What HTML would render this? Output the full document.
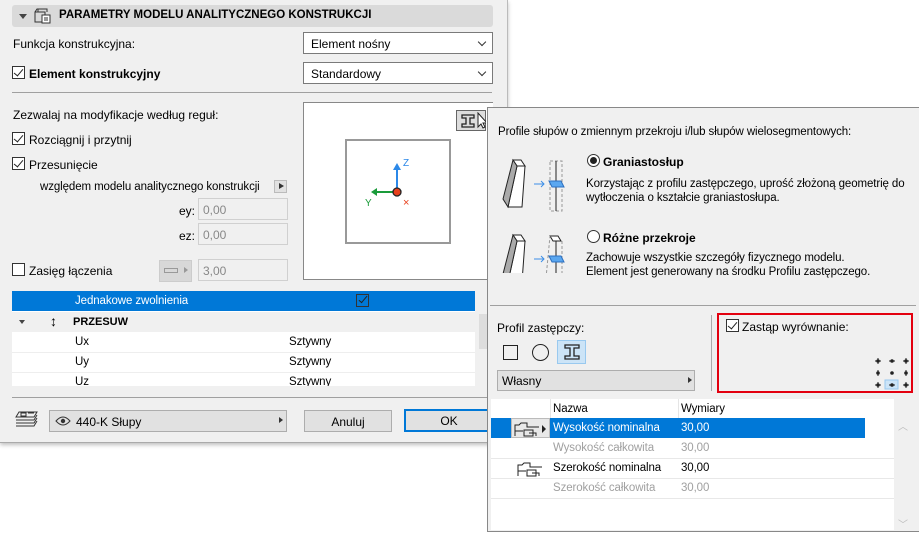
<!DOCTYPE html>
<html><head><meta charset="utf-8"><style>
*{box-sizing:border-box;margin:0;padding:0}
body{width:919px;height:533px;overflow:hidden;background:#fff;font-family:"Liberation Sans",sans-serif;font-size:12px;color:#000;position:relative}
.a{position:absolute;white-space:nowrap}
.cb{position:absolute;width:13px;height:13px;border:1px solid #333;background:#fff}
.cb.on::after{content:"";position:absolute;left:3px;top:0px;width:4px;height:8px;border:solid #222;border-width:0 1.5px 1.5px 0;transform:rotate(40deg)}
.dd{position:absolute;background:#fff;border:1px solid #7a7a7a;padding:4px 7px}
.dd::after{content:"";position:absolute;right:7px;top:6px;width:5px;height:5px;border:solid #333;border-width:0 1px 1px 0;transform:rotate(45deg)}
.inp{position:absolute;background:#f0f0f0;border:1px solid #d0d0d0;color:#888;padding:4px 4px}
.btn{position:absolute;background:#e1e1e1;border:1px solid #adadad;text-align:center;padding-top:4px}
.n{font-size:11.5px;letter-spacing:-0.1px}
</style></head><body>
<!-- left panel -->
<div class="a" style="left:0;top:0;width:508px;height:443px;background:#f0f0f0;border-right:1px solid #bbb;border-bottom:1px solid #aaa;box-shadow:0 2px 4px rgba(0,0,0,.25)"></div>
<div class="a" style="left:12px;top:5px;width:481px;height:22px;background:#dadada;border-radius:3px"></div>
<div class="a" style="left:19px;top:14px;border:4px solid transparent;border-top:5px solid #444"></div>
<svg class="a" style="left:34px;top:8px" width="18" height="16"><path d="M1 4h10v10H1zM1 4l2-3h10v3M4 1v3" fill="none" stroke="#333"/><rect x="8" y="7" width="8" height="8" fill="#fff" stroke="#333"/><path d="M10 10h4M10 12h4" stroke="#333"/></svg>
<div class="a" style="left:59px;top:9px;font-weight:bold;font-size:11.5px">PARAMETRY MODELU ANALITYCZNEGO KONSTRUKCJI</div>
<div class="a" style="left:13px;top:37px">Funkcja konstrukcyjna:</div>
<div class="dd" style="left:303px;top:32px;width:190px;height:22px">Element nośny</div>
<div class="cb on" style="left:12px;top:66px"></div>
<div class="a" style="left:29px;top:67px;font-weight:bold">Element konstrukcyjny</div>
<div class="dd" style="left:303px;top:62px;width:190px;height:22px">Standardowy</div>
<div class="a" style="left:12px;top:92px;width:480px;border-top:1px solid #a0a0a0"></div>
<div class="a" style="left:13px;top:108px">Zezwalaj na modyfikacje według reguł:</div>
<div class="cb on" style="left:12px;top:132px"></div>
<div class="a" style="left:29px;top:133px">Rozciągnij i przytnij</div>
<div class="cb on" style="left:12px;top:157px"></div>
<div class="a" style="left:29px;top:158px">Przesunięcie</div>
<div class="a n" style="left:40px;top:181px">względem modelu analitycznego konstrukcji</div>
<div class="a" style="left:274px;top:180px;width:13px;height:13px;background:#e1e1e1;border:1px solid #bbb"></div>
<div class="a" style="left:279px;top:183px;border:3.5px solid transparent;border-left:5px solid #333"></div>
<div class="a" style="left:179px;top:204px">ey:</div>
<div class="inp" style="left:198px;top:198px;width:90px;height:22px">0,00</div>
<div class="a" style="left:179px;top:229px">ez:</div>
<div class="inp" style="left:198px;top:223px;width:90px;height:22px">0,00</div>
<div class="cb" style="left:12px;top:263px"></div>
<div class="a" style="left:29px;top:264px">Zasięg łączenia</div>
<div class="a" style="left:159px;top:260px;width:33px;height:22px;background:#d8d8d8;border:1px solid #ccc"></div>
<div class="a" style="left:164px;top:268px;width:14px;height:5px;border:1px solid #999"></div>
<div class="a" style="left:184px;top:267px;border:3.5px solid transparent;border-left:4px solid #999"></div>
<div class="inp" style="left:198px;top:259px;width:90px;height:22px">3,00</div>
<!-- preview -->
<div class="a" style="left:303px;top:102px;width:190px;height:178px;background:#fff;border:1px solid #888;border-right:none"></div>
<div class="a" style="left:345px;top:139px;width:106px;height:105px;border:2px solid #999"></div>
<div class="a" style="left:456px;top:110px;width:30px;height:21px;background:#ddd;border:1px solid #666"></div>
<svg class="a" style="left:460px;top:112px" width="26" height="18"><path d="M2 3h12v3h-4v6h4v3H2v-3h4V6H2z" fill="none" stroke="#222" stroke-width="1.3"/><path d="M18 1v14l3-3 2 4 2-1-2-4h4z" fill="#fff" stroke="#222"/></svg>
<svg class="a" style="left:360px;top:155px" width="60" height="55"><path d="M37 12v26" stroke="#2b88e8" stroke-width="2"/><path d="M33 15l4-7 4 7z" fill="#2b88e8"/><path d="M35 37H14" stroke="#1a9b3a" stroke-width="2"/><path d="M17 33l-6 4 6 4z" fill="#1a9b3a"/><circle cx="37" cy="37" r="4" fill="#e8401c" stroke="#222" stroke-width="1.3"/><text x="43" y="11" font-size="10" fill="#2b88e8" font-family="Liberation Sans">Z</text><text x="5" y="51" font-size="10" fill="#1a9b3a" font-family="Liberation Sans">Y</text><text x="43" y="51" font-size="11" fill="#e8401c" font-family="Liberation Sans">×</text></svg>
<!-- table -->
<div class="a" style="left:12px;top:291px;width:463px;height:95px;background:#fff"></div>
<div class="a" style="left:12px;top:291px;width:463px;height:20px;background:#0078d7"></div>
<div class="a n" style="left:75px;top:295px;color:#fff">Jednakowe zwolnienia</div>
<div class="a" style="left:356px;top:294px;width:13px;height:13px;border:1px solid #333"></div>
<div class="a" style="left:361px;top:294px;width:4px;height:9px;border:solid #222;border-width:0 1.5px 1.5px 0;transform:rotate(40deg)"></div>
<div class="a" style="left:12px;top:312px;width:463px;height:20px;background:#f0f0f0"></div>
<div class="a" style="left:19px;top:320px;border:3px solid transparent;border-top:4px solid #444"></div>
<div class="a" style="left:50px;top:313px;font-size:14px">↕</div>
<div class="a" style="left:73px;top:316px;font-weight:bold;font-size:11px">PRZESUW</div>
<div class="a n" style="left:75px;top:336px">Ux</div><div class="a n" style="left:289px;top:336px">Sztywny</div>
<div class="a" style="left:12px;top:352px;width:463px;border-top:1px solid #eee"></div>
<div class="a n" style="left:75px;top:356px">Uy</div><div class="a n" style="left:289px;top:356px">Sztywny</div>
<div class="a" style="left:12px;top:372px;width:463px;border-top:1px solid #eee"></div>
<div class="a" style="left:12px;top:374px;width:463px;height:12px;overflow:hidden"><div class="a n" style="left:63px;top:2px">Uz</div><div class="a n" style="left:277px;top:2px">Sztywny</div></div>
<div class="a" style="left:479px;top:314px;width:9px;height:35px;background:#ddd"></div>
<div class="a" style="left:12px;top:397px;width:481px;border-top:1px solid #a0a0a0"></div>
<svg class="a" style="left:14px;top:410px" width="26" height="20"><path d="M5 2h18l-3 5H2zM2 10h18l3-5M2 13h18l3-5M2 16h18l3-5" fill="none" stroke="#333"/><path d="M7 3h5v3H7zM14 3h6" stroke="#333" fill="none"/></svg>
<div class="btn" style="left:49px;top:410px;width:238px;height:22px;text-align:left;padding-left:26px">440-K Słupy</div>
<svg class="a" style="left:55px;top:415px" width="16" height="12"><path d="M1 6q7-8 14 0q-7 8-14 0z" fill="none" stroke="#333"/><circle cx="8" cy="6" r="2.2" fill="#333"/></svg>
<div class="a" style="left:279px;top:417px;border:3.5px solid transparent;border-left:4px solid #333"></div>
<div class="btn" style="left:304px;top:410px;width:88px;height:22px">Anuluj</div>
<div class="btn" style="left:404px;top:409px;width:90px;height:23px;border:2px solid #0078d7;padding-top:3px">OK</div>
<!-- popup -->
<div class="a" style="left:487px;top:107px;width:432px;height:425px;background:#f0f0f0;border:1px solid #888;border-right:none"></div>
<div class="a n" style="left:498px;top:126px">Profile słupów o zmiennym przekroju i/lub słupów wielosegmentowych:</div>
<svg class="a" style="left:500px;top:158px" width="75" height="115">
<path d="M13 2h8l4 6h-8z" fill="#fff" stroke="#222"/><path d="M17 8h8l-3 41H8z" fill="#fff" stroke="#222"/><path d="M13 2l4 6-9 41-5-8z" fill="#aaa" stroke="#222"/>
<path d="M50 3h12v50H50z" fill="none" stroke="#999" stroke-dasharray="3 2"/><path d="M56 3v50" stroke="#222"/><path d="M49 23h12l3 6H52z" fill="#5aa7f0" stroke="#2c6fc0"/><path d="M34 26h10" stroke="#3b8ee8"/><path d="M41 23l3 3-3 3" fill="none" stroke="#3b8ee8"/>
<g transform="translate(0,75)"><path d="M13 2h8l4 6h-8z" fill="#fff" stroke="#222"/><path d="M17 8h8l-3 41H8z" fill="#fff" stroke="#222"/><path d="M13 2l4 6-9 41-5-8z" fill="#aaa" stroke="#222"/><path d="M50 3h8l3 5H53zM46 45h14l3 6H49z" fill="#fff" stroke="#222"/><path d="M62 8v40M46 45l4-42" fill="none" stroke="#999" stroke-dasharray="3 2"/><path d="M56 8v40" stroke="#222"/><path d="M49 23h12l3 6H52z" fill="#5aa7f0" stroke="#2c6fc0"/><path d="M34 26h10" stroke="#3b8ee8"/><path d="M41 23l3 3-3 3" fill="none" stroke="#3b8ee8"/></g></svg>
<div class="a" style="left:587px;top:154px;width:13px;height:13px;border:1px solid #333;border-radius:50%;background:#fff"></div>
<div class="a" style="left:590px;top:157px;width:7px;height:7px;border-radius:50%;background:#222"></div>
<div class="a" style="left:603px;top:155px;font-weight:bold">Graniastosłup</div>
<div class="a n" style="left:586px;top:177px;line-height:14px">Korzystając z profilu zastępczego, uprość złożoną geometrię do<br>wytłoczenia o kształcie graniastosłupa.</div>
<div class="a" style="left:587px;top:230px;width:13px;height:13px;border:1px solid #333;border-radius:50%;background:#fff"></div>
<div class="a" style="left:603px;top:231px;font-weight:bold">Różne przekroje</div>
<div class="a n" style="left:586px;top:251px;line-height:14px">Zachowuje wszystkie szczegóły fizycznego modelu.<br>Element jest generowany na środku Profilu zastępczego.</div>
<div class="a" style="left:490px;top:305px;width:426px;border-top:1px solid #a0a0a0"></div>
<div class="a" style="left:497px;top:321px">Profil zastępczy:</div>
<div class="a" style="left:503px;top:345px;width:15px;height:15px;border:1.3px solid #222"></div>
<div class="a" style="left:532px;top:344px;width:17px;height:17px;border:1.3px solid #222;border-radius:50%"></div>
<div class="a" style="left:557px;top:340px;width:29px;height:24px;background:#cce4f7;border:1px solid #99c9ef"></div>
<svg class="a" style="left:563px;top:343px" width="18" height="18"><path d="M2 2h14v3h-5v8h5v3H2v-3h5V5H2z" fill="none" stroke="#222" stroke-width="1.3"/></svg>
<div class="btn" style="left:497px;top:370px;width:198px;height:21px;text-align:left;padding-left:4px;padding-top:3px">Własny</div>
<div class="a" style="left:688px;top:377px;border:3.5px solid transparent;border-left:4px solid #333"></div>
<div class="a" style="left:711px;top:315px;height:76px;border-left:1px solid #aaa"></div>
<div class="a" style="left:717px;top:313px;width:196px;height:80px;border:2px solid #e3000f"></div>
<div class="cb on" style="left:726px;top:319px"></div>
<div class="a" style="left:742px;top:320px">Zastąp wyrównanie:</div>
<svg class="a" style="left:874px;top:357px" width="36" height="34"><rect x="11" y="23" width="13" height="9" fill="#cce4f7" stroke="#99c9ef"/><g stroke="#222" stroke-width="1"><path d="M1 4h6M15 4h6M29 4h6M1 28h6M15 28h6M29 28h6M4 1v6M32 1v6M4 13v6M32 13v6M4 25v6M32 25v6"/></g><g fill="#222"><circle cx="4" cy="4" r="1.8"/><circle cx="18" cy="4" r="1.8"/><circle cx="32" cy="4" r="1.8"/><circle cx="4" cy="16" r="1.8"/><circle cx="18" cy="16" r="1.8"/><circle cx="32" cy="16" r="1.8"/><circle cx="4" cy="28" r="1.8"/><circle cx="18" cy="28" r="1.8"/><circle cx="32" cy="28" r="1.8"/></g></svg>
<!-- lower table -->
<div class="a" style="left:491px;top:399px;width:403px;height:131px;background:#fff"></div>
<div class="a" style="left:894px;top:399px;width:18px;height:131px;background:#f0f0f0"></div>
<div class="a" style="left:898px;top:418px;color:#bbb;font-size:10px">︿</div>
<div class="a" style="left:898px;top:516px;color:#bbb;font-size:10px">﹀</div>
<div class="a" style="left:550px;top:399px;height:19px;border-left:1px solid #e5e5e5"></div>
<div class="a" style="left:678px;top:399px;height:19px;border-left:1px solid #e5e5e5"></div>
<div class="a n" style="left:553px;top:403px">Nazwa</div>
<div class="a n" style="left:681px;top:403px">Wymiary</div>
<div class="a" style="left:491px;top:418px;width:374px;height:20px;background:#0078d7"></div>
<div class="a" style="left:511px;top:418px;width:39px;height:20px;background:#e8e8e8;border:1px solid #bbb"></div>
<svg class="a" style="left:514px;top:421px" width="34" height="16"><path d="M1 15V4h4l2-2h6v4h12M1 10h8" fill="none" stroke="#222"/><path d="M10 9h9v6h-9zM15 12h7v3" fill="none" stroke="#222"/><path d="M28 4l4 4-4 4z" fill="#222"/></svg>
<div class="a n" style="left:553px;top:422px;color:#fff">Wysokość nominalna</div>
<div class="a n" style="left:681px;top:422px;color:#fff">30,00</div>
<div class="a n" style="left:553px;top:442px;color:#a0a0a0">Wysokość całkowita</div>
<div class="a n" style="left:681px;top:442px;color:#a0a0a0">30,00</div>
<div class="a" style="left:491px;top:458px;width:403px;border-top:1px solid #e8e8e8"></div>
<svg class="a" style="left:517px;top:461px" width="30" height="16"><path d="M1 15V4h4l2-2h6v4h12M1 10h8" fill="none" stroke="#222"/><path d="M10 9h9v6h-9zM15 12h7v3" fill="none" stroke="#222"/></svg>
<div class="a n" style="left:553px;top:462px">Szerokość nominalna</div>
<div class="a n" style="left:681px;top:462px">30,00</div>
<div class="a" style="left:491px;top:478px;width:403px;border-top:1px solid #e8e8e8"></div>
<div class="a n" style="left:553px;top:482px;color:#a0a0a0">Szerokość całkowita</div>
<div class="a n" style="left:681px;top:482px;color:#a0a0a0">30,00</div>
<div class="a" style="left:491px;top:498px;width:403px;border-top:1px solid #e8e8e8"></div>
</body></html>
